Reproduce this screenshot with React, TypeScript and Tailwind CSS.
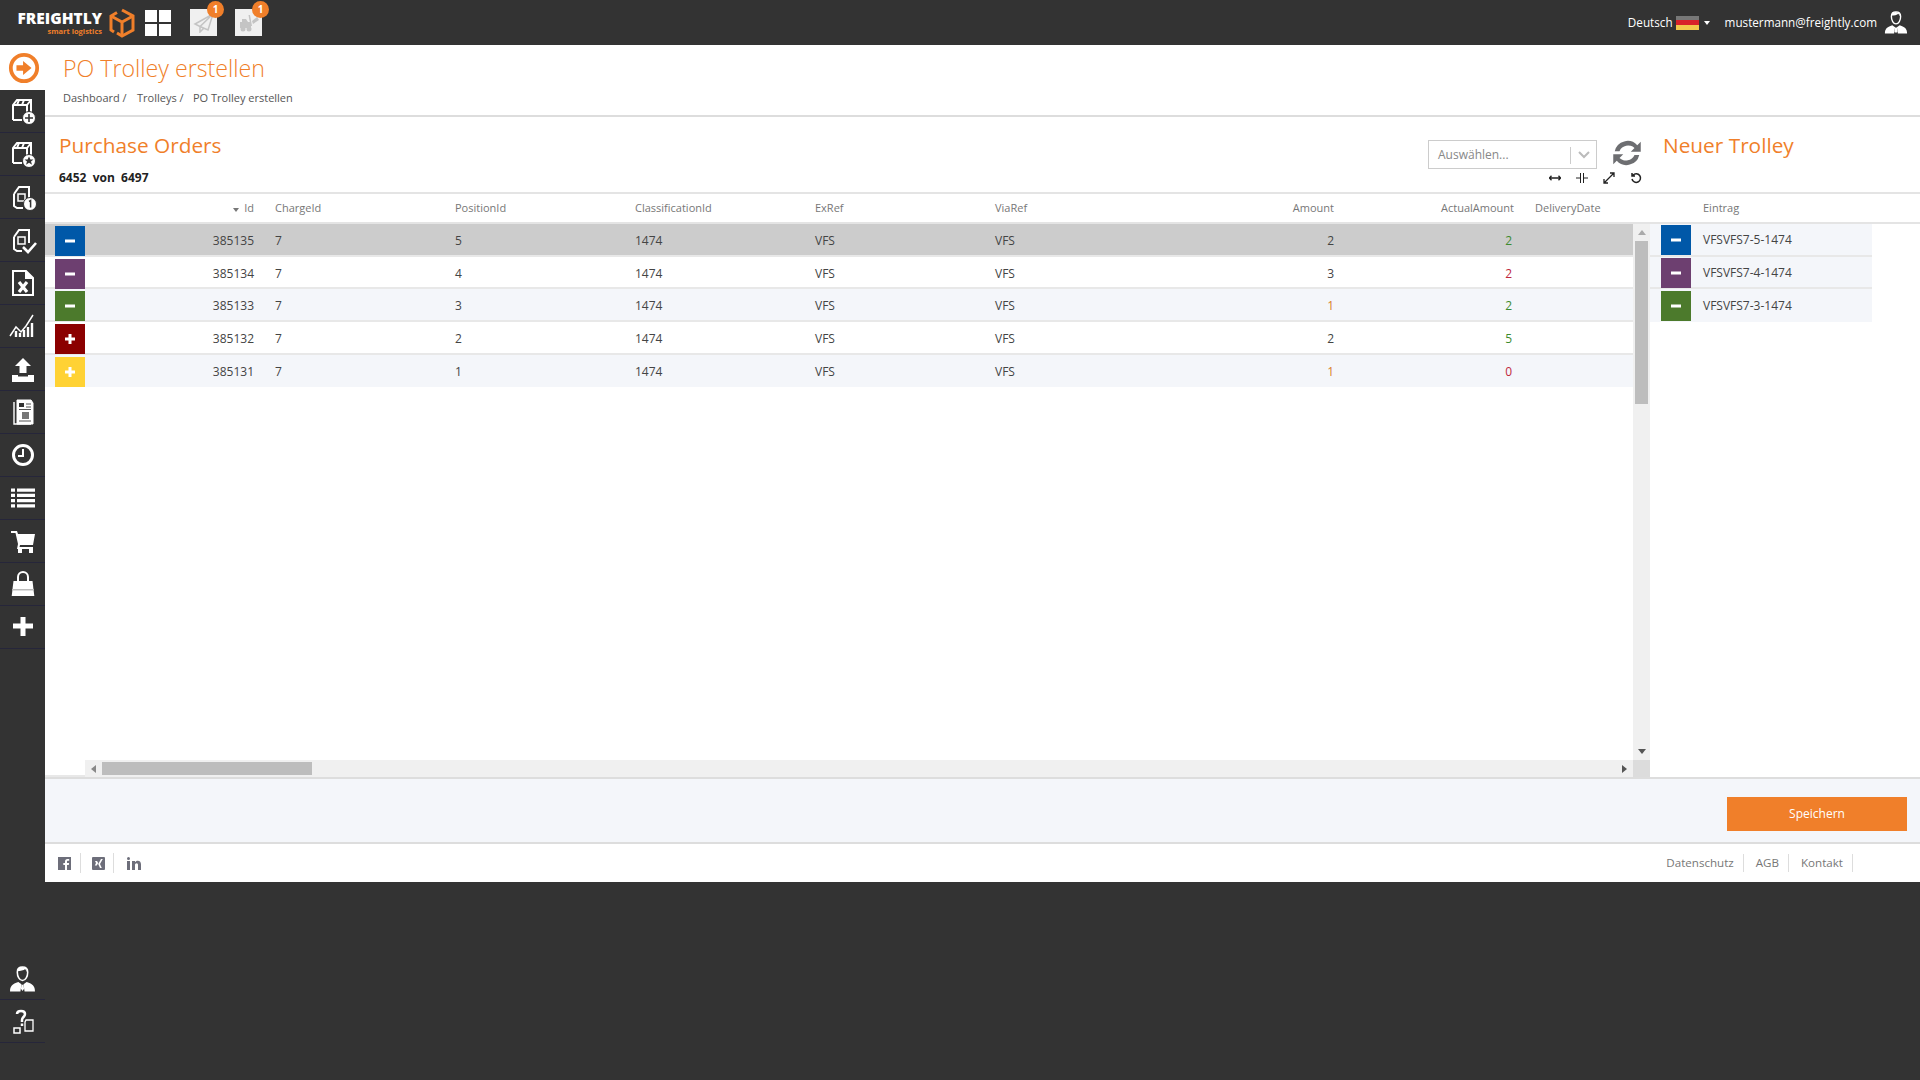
import React from "react";

const rows = [
  { id: 385135, pos: 5, amount: 2, actual: 2, actualCls: "text-[#3d8b2f]", amountCls: "text-[#444]", btn: "bg-[#0058a8]", sign: "-", bg: "bg-[#cccccc]", entry: "VFSVFS7-5-1474" },
  { id: 385134, pos: 4, amount: 3, actual: 2, actualCls: "text-[#c0283c]", amountCls: "text-[#444]", btn: "bg-[#6d3f70]", sign: "-", bg: "bg-white", entry: "VFSVFS7-4-1474" },
  { id: 385133, pos: 3, amount: 1, actual: 2, actualCls: "text-[#3d8b2f]", amountCls: "text-[#d9822b]", btn: "bg-[#4c7a2c]", sign: "-", bg: "bg-[#f4f6fa]", entry: "VFSVFS7-3-1474" },
  { id: 385132, pos: 2, amount: 2, actual: 5, actualCls: "text-[#3d8b2f]", amountCls: "text-[#444]", btn: "bg-[#8b0000]", sign: "+", bg: "bg-white", entry: "" },
  { id: 385131, pos: 1, amount: 1, actual: 0, actualCls: "text-[#c0283c]", amountCls: "text-[#d9822b]", btn: "bg-[#ffd234]", sign: "+", bg: "bg-[#f4f6fa]", entry: "" },
];

const gridCols = "grid grid-cols-[230px_180px_180px_180px_180px_180px_180px_180px_98px]";

function SignButton({ cls, sign }: { cls: string; sign: string }) {
  return (
    <div className={`flex h-[30px] w-[30px] items-center justify-center ${cls}`}>
      <svg width="12" height="12" viewBox="0 0 12 12" fill="white">
        <rect x="1" y="4.5" width="10" height="3" />
        {sign === "+" && <rect x="4.5" y="1" width="3" height="10" />}
      </svg>
    </div>
  );
}

function Box({ children }: { children: React.ReactNode }) {
  return (
    <svg width="30" height="30" viewBox="0 0 30 30" fill="none" stroke="white" strokeWidth="2">
      {children}
    </svg>
  );
}

const sideIcons: React.ReactNode[] = [
  <Box key="a">
    <path d="M5 24V9l4-5h14v12M5 9h14v11M19 9l4-5M5 24h9M11 4l-2 5M16 4l-2 5" />
    <circle cx="21" cy="22" r="6.5" fill="white" stroke="#333" strokeWidth="1" />
    <path d="M21 18v8M17 22h8" stroke="#333" strokeWidth="1.6" />
  </Box>,
  <Box key="b">
    <path d="M5 24V9l4-5h14v12M5 9h14v11M19 9l4-5M5 24h9M11 4l-2 5M16 4l-2 5" />
    <circle cx="21" cy="22" r="6.5" fill="white" stroke="#333" strokeWidth="1" />
    <path d="M21 17.5l1.4 3h3.1l-2.5 2 1 3.2-3-1.900-3 1.900 1-3.200-2.500-2h3.100z" fill="#333" stroke="none" />
  </Box>,
  <Box key="c">
    <path d="M6 12l5-7h10v12M6 12v12l3 2h6" />
    <rect x="10" y="12" width="7" height="7" strokeWidth="1.5" />
    <circle cx="22" cy="22" r="6.5" fill="white" stroke="#333" strokeWidth="1" />
    <path d="M21 19.5l1.6-1v7" stroke="#333" strokeWidth="1.5" />
  </Box>,
  <Box key="d">
    <path d="M6 12l5-7h10v13M6 12v12l3 2h5" />
    <rect x="10" y="12" width="7" height="7" strokeWidth="1.5" />
    <path d="M15 22l5 5 8-9" strokeWidth="2.6" />
  </Box>,
  <Box key="e">
    <path d="M5 3h13l7 7v17H5z" />
    <path d="M18 3v7h7" fill="white" />
    <path d="M11 14l8 10M19 14l-8 10" strokeWidth="3.2" />
  </Box>,
  <Box key="f">
    <path d="M2 25l6-9 5 5 5-6 7-11" strokeWidth="1.5" />
    <path d="M8 26v-6M12 26v-4M16 26v-7M20 26v-10M24 26V12" strokeWidth="2.4" />
  </Box>,
  <svg key="g" width="30" height="30" viewBox="0 0 30 30" fill="white">
    <path d="M15 4l8 8h-4.500v7h-7v-7H7z" />
    <path d="M4 21h6v1.500h10V21h6v7H4z" />
  </svg>,
  <Box key="h">
    <path d="M9 3h14l2 3v21H9z" fill="white" stroke="white" strokeWidth="1" />
    <path d="M6 5v22h17" strokeWidth="1.4" />
    <rect x="11" y="6" width="5" height="4" fill="#333" stroke="none" />
    <path d="M18 7h5M18 10h5M11 12.500h12M11 24h12" stroke="#555" strokeWidth="1" />
    <rect x="14" y="15" width="7" height="7" fill="#777" stroke="none" />
  </Box>,
  <svg key="i" width="30" height="30" viewBox="0 0 30 30" fill="none" stroke="white">
    <circle cx="15" cy="15" r="9.500" strokeWidth="3" />
    <path d="M15 9v7h-5" strokeWidth="2" />
  </svg>,
  <svg key="j" width="30" height="30" viewBox="0 0 30 30" fill="white">
    <path d="M3 5.500h4v3.200H3zM9 5.500h18v3.200H9zM3 10.800h4V14H3zM9 10.800h18V14H9zM3 16h4v3.200H3zM9 16h18v3.200H9zM3 21.300h4v3.200H3zM9 21.300h18v3.200H9z" />
  </svg>,
  <svg key="k" width="30" height="30" viewBox="0 0 30 30" fill="white">
    <path d="M3 5h6l1 3h17l-2 11H12l-.5 2H25v2H9l1-5L7.500 7H3z" />
    <rect x="10" y="23" width="4" height="4" />
    <rect x="21" y="23" width="4" height="4" />
  </svg>,
  <svg key="l" width="30" height="30" viewBox="0 0 30 30" fill="white">
    <path d="M5.500 12h19l1.800 15H3.700z" />
    <path d="M10 14V8a5 5 0 0 1 10 0v6" fill="none" stroke="white" strokeWidth="2" />
    <rect x="4" y="20" width="22" height="1.500" fill="#bbb" />
  </svg>,
  <svg key="m" className="-mt-[3px]" width="30" height="30" viewBox="0 0 30 30" fill="white">
    <path d="M12.500 6h5v6.500H25v5h-7.500V25h-5v-7.500H5v-5h7.500z" />
  </svg>,
];

function Person({ size = 26 }: { size?: number }) {
  return (
    <svg width={size} height={size} viewBox="0 0 26 26" fill="white">
      <path d="M13 1c3.500 0 5 2 5 5 0 4-2 8-5 8s-5-4-5-8c0-3 1.500-5 5-5z" fill="none" stroke="white" strokeWidth="1.500" />
      <path d="M8.500 5c2 0 6-.5 7-2l2 3-1-4-4-1-4 1z" />
      <path d="M9 15.500l3 2-1 7H1c0-5 2-7 8-9zM17 15.500l-3 2 1 7h10c0-5-2-7-8-9z" />
      <path d="M12 18h2l.5 4-1.500 2-1.500-2z" />
    </svg>
  );
}

function SideItem({ children }: { children: React.ReactNode }) {
  return (
    <div className="flex h-[43px] items-center justify-center border-b border-[#26263a]">{children}</div>
  );
}

function TopTile({ children }: { children: React.ReactNode }) {
  return (
    <div className="relative flex h-[27px] w-[27px] items-center justify-center bg-[#f0f0f0]">
      {children}
      <span className="absolute -right-[7px] -top-[8px] flex h-[17px] w-[17px] items-center justify-center rounded-full bg-[#f07f2a] text-[10px] font-bold text-white">
        1
      </span>
    </div>
  );
}

function SmallIcon({ children }: { children: React.ReactNode }) {
  return (
    <svg width="12" height="12" viewBox="0 0 12 12" fill="none" stroke="#222" strokeWidth="1.300">
      {children}
    </svg>
  );
}

function FooterLink({ label }: { label: string }) {
  return <span className="flex h-[18px] items-center border-r border-[#ddd] pl-[12px] pr-[9px] text-[11.600px] text-[#777]">{label}</span>;
}

export default function App() {
  return (
    <div className="flex h-[1080px] w-[1920px] flex-col overflow-hidden bg-[#333333] font-['Open_Sans',sans-serif]">
      <header className="flex h-[45px] items-center text-white">
        <div className="ml-[17px] flex w-[85px] flex-col items-end leading-none">
          <span className="text-[15.500px] font-extrabold leading-[15px]">FREIGHTLY</span>
          <span className="mt-[1px] text-[7.500px] font-bold leading-[8px] text-[#f07f2a]">smart logistics</span>
        </div>
        <svg className="ml-[7px]" width="26" height="30" viewBox="0 0 26 30" fill="none" stroke="#f07f2a" strokeWidth="3">
          <path d="M13 2l11 6v14l-11 6-5-3M8 4.500L2 8v14l3 2" />
          <path d="M2 8l11 6 11-6M13 14v14" />
        </svg>
        <div className="ml-[10px] grid h-[26px] w-[26px] grid-cols-2 gap-[2px]">
          <div className="bg-white" />
          <div className="bg-white" />
          <div className="bg-white" />
          <div className="bg-white" />
        </div>
        <div className="ml-[19px]">
          <TopTile>
            <svg width="21" height="21" viewBox="0 0 21 21" fill="none" stroke="#c4c4c4" strokeWidth="1.500">
              <path d="M20 2L2 12l5 2.500zM7 14.500V20l3.500-3.500M20 2l-5 16-8-3.500" />
            </svg>
          </TopTile>
        </div>
        <div className="ml-[18px]">
          <TopTile>
            <svg width="22" height="20" viewBox="0 0 22 20" fill="#c4c4c4">
              <path d="M2 9h2V6h4l2 3h3v6H2z" />
              <path d="M12 2l2 11h-1.500L10.500 2zM14 8l5-4 2 3-6 4z" />
              <circle cx="5" cy="16" r="2.500" />
              <circle cx="11" cy="16" r="2.500" />
            </svg>
          </TopTile>
        </div>
        <div className="ml-auto flex items-center">
          <span className="text-[11.700px]">Deutsch</span>
          <div className="ml-[3px] flex h-[14px] w-[23px] flex-col">
            <div className="flex-1 bg-[#777]" />
            <div className="flex-1 bg-[#d8232a]" />
            <div className="flex-1 bg-[#f2c94c]" />
          </div>
          <div className="ml-[5px] h-0 w-0 border-x-[3.500px] border-t-[4px] border-x-transparent border-t-white" />
          <span className="ml-[15px] text-[11.700px]">mustermann@freightly.com</span>
          <div className="ml-[7px] mr-[12px]">
            <Person size={24} />
          </div>
        </div>
      </header>

      <div className="flex flex-1">
        <aside className="flex w-[45px] flex-col justify-between pb-[37px]">
          <div>
            <div className="flex h-[45px] items-center justify-center bg-white pl-[3px]">
              <svg width="32" height="32" viewBox="0 0 34 34">
                <circle cx="17" cy="17" r="14" fill="none" stroke="#f07f2a" strokeWidth="4" />
                <path d="M9 14h7V9.500l9 7.500-9 7.500V20H9z" fill="#f07f2a" />
              </svg>
            </div>
            {sideIcons.map((icon, i) => (
              <SideItem key={i}>{icon}</SideItem>
            ))}
          </div>
          <div>
            <SideItem>
              <div className="mt-[2px]">
                <Person size={27} />
              </div>
            </SideItem>
            <SideItem>
              <svg className="mt-[2px]" width="26" height="26" viewBox="0 0 26 26" fill="none" stroke="white">
                <path d="M7 5c0-4 8-4 8 0 0 3-3 3-3 6v2" strokeWidth="2.500" />
                <path d="M12 14.500v2.500" strokeWidth="2.500" />
                <path d="M16 11h4l3 0v11h-8V13z" strokeWidth="1.300" />
                <rect x="4" y="19" width="6" height="5" strokeWidth="1.500" />
              </svg>
            </SideItem>
          </div>
        </aside>

        <main className="flex h-[837px] flex-1 flex-col bg-white">
          <div className="h-[72px] border-b-2 border-[#dddddd] pl-[18px]">
            <h1 className="pt-[6px] text-[23.200px] font-light leading-[34px] text-[#f07f2a]">PO Trolley erstellen</h1>
            <div className="mt-[5px] flex text-[11px] leading-[16px] text-[#555]">
              <span className="w-[74px]">Dashboard /</span>
              <span className="w-[56px]">Trolleys /</span>
              <span>PO Trolley erstellen</span>
            </div>
          </div>

          <div className="flex h-[77px] border-b-2 border-[#e4e4e4]">
            <div className="flex w-[1605px] justify-between pl-[14px] pr-[8px]">
              <div>
                <h2 className="pt-[13px] text-[20.800px] leading-[30px] text-[#f07f2a]">Purchase Orders</h2>
                <p className="mt-[10px] text-[12px] font-bold leading-[16px] text-[#222]">6452&nbsp; von&nbsp; 6497</p>
              </div>
              <div className="flex flex-col items-end pt-[23px]">
                <div className="flex items-center">
                  <div className="flex h-[29px] w-[169px] items-center border border-[#cccccc] pl-[9px] pt-[1px] text-[12px] text-[#888]">
                    Auswählen...
                    <div className="ml-auto flex h-[17px] w-[26px] items-center justify-center border-l border-[#cccccc]">
                      <svg width="12" height="8" viewBox="0 0 12 8" fill="none" stroke="#bbb" strokeWidth="2">
                        <path d="M1 1l5 5 5-5" />
                      </svg>
                    </div>
                  </div>
                  <svg className="ml-[15px] -mt-[4px]" width="30" height="30" viewBox="0 0 24 24" fill="#6d6e71">
                    <path d="M23 3v8h-8l3-3a7.500 7.500 0 0 0-12 2.500H2.200A10.500 10.500 0 0 1 20.200 5.800zM1 21v-8h8l-3 3a7.500 7.500 0 0 0 12-2.500h3.800A10.500 10.500 0 0 1 3.800 18.200z" />
                  </svg>
                </div>
                <div className="mt-[3px] flex w-[93px] justify-between">
                  <SmallIcon>
                    <path d="M0 6h12M2.500 3.800L.5 6l2 2.200M9.500 3.800l2 2.200-2 2.200" />
                  </SmallIcon>
                  <SmallIcon>
                    <path d="M4.500 1v10M7.500 1v10M0 6h4M8 6h4" strokeWidth="1" />
                  </SmallIcon>
                  <SmallIcon>
                    <path d="M1.500 10.500l9-9M1 7v4h4M7 1h4v4" />
                  </SmallIcon>
                  <SmallIcon>
                    <path d="M3 3.200a4.300 4.300 0 1 1-1 3.800M2 1v3h3" strokeWidth="1.500" />
                  </SmallIcon>
                </div>
              </div>
            </div>
            <h2 className="pl-[13px] pt-[13px] text-[20.800px] leading-[30px] text-[#f07f2a]">Neuer Trolley</h2>
          </div>

          <div className="flex flex-1">
            <div className="flex w-[1605px] flex-col">
              <div className="flex h-[30px] border-b-2 border-[#e4e4e4] pt-[1px] text-[11px] text-[#777]">
                <div className={`${gridCols} w-[1588px] items-center`}>
                  <div className="flex items-center justify-end pr-[21px]">
                    <div className="mr-[5px] mt-[3px] h-0 w-0 border-x-[3.500px] border-t-[4px] border-x-transparent border-t-[#777]" />
                    Id
                  </div>
                  <div>ChargeId</div>
                  <div>PositionId</div>
                  <div>ClassificationId</div>
                  <div>ExRef</div>
                  <div>ViaRef</div>
                  <div className="pr-[21px] text-right">Amount</div>
                  <div className="pr-[21px] text-right">ActualAmount</div>
                  <div>DeliveryDate</div>
                </div>
              </div>
              <div className="flex flex-1">
                <div className="flex w-[1588px] flex-col">
                  <div className="flex-1 text-[12px] text-[#444]">
                    {rows.map((r) => (
                      <div key={r.id} className={`${gridCols} h-[32.700px] items-center border-b-2 border-[#e8e8e8] pt-[2px] last:border-b-transparent ${r.bg}`}>
                        <div className="flex items-center justify-between pl-[10px] pr-[21px]">
                          <SignButton cls={r.btn} sign={r.sign} />
                          <span>{r.id}</span>
                        </div>
                        <div>7</div>
                        <div>{r.pos}</div>
                        <div>1474</div>
                        <div>VFS</div>
                        <div>VFS</div>
                        <div className={`pr-[21px] text-right ${r.amountCls}`}>{r.amount}</div>
                        <div className={`pr-[23px] text-right ${r.actualCls}`}>{r.actual}</div>
                        <div />
                      </div>
                    ))}
                  </div>
                  <div className="flex h-[17px] items-end">
                    <div className="h-[2px] w-[40px] bg-[#e8e8e8]" />
                    <div className="flex h-[17px] flex-1 items-center bg-[#f0f0f0]">
                      <div className="ml-[6px] h-0 w-0 border-y-[4px] border-r-[5px] border-y-transparent border-r-[#888]" />
                      <div className="ml-[6px] h-[13px] w-[210px] bg-[#bdbdbd]" />
                      <div className="ml-auto mr-[6px] h-0 w-0 border-y-[4px] border-l-[5px] border-y-transparent border-l-[#555]" />
                    </div>
                  </div>
                </div>
                <div className="flex w-[17px] flex-col bg-[#f0f0f0]">
                  <div className="flex h-[17px] items-center justify-center">
                    <div className="h-0 w-0 border-x-[4px] border-b-[5px] border-x-transparent border-b-[#aaa]" />
                  </div>
                  <div className="mx-[2px] h-[163px] bg-[#bdbdbd]" />
                  <div className="mt-auto flex h-[18px] items-center justify-center">
                    <div className="h-0 w-0 border-x-[4px] border-t-[5px] border-x-transparent border-t-[#555]" />
                  </div>
                  <div className="h-[17px] bg-[#dcdcdc]" />
                </div>
              </div>
            </div>

            <div className="flex flex-1 flex-col">
              <div className="flex h-[30px] items-center border-b-2 border-[#e4e4e4] pl-[53px] pt-[1px] text-[11px] text-[#777]">Eintrag</div>
              <div className="w-[222px] text-[12px] text-[#444]">
                {rows
                  .filter((r) => r.entry)
                  .map((r) => (
                    <div key={r.id} className="flex h-[32.700px] items-center border-b-2 border-[#e8e8e8] bg-[#f4f6fa] pl-[11px] pt-[2px] last:border-b-transparent">
                      <SignButton cls={r.btn} sign={r.sign} />
                      <span className="ml-[12px]">{r.entry}</span>
                    </div>
                  ))}
              </div>
            </div>
          </div>

          <div className="flex h-[67px] items-center justify-end border-y-2 border-[#dddddd] bg-[#f4f6fa] pr-[13px]">
            <button className="mt-[6px] h-[34px] w-[180px] bg-[#f07f2a] text-[12px] text-white">Speichern</button>
          </div>

          <footer className="flex h-[38px] items-center pl-[13px]">
            <div className="flex h-[20px] items-center border-r border-[#ddd] pr-[9px]">
              <svg width="13" height="13" viewBox="0 0 13 13">
                <rect width="13" height="13" fill="#6d6e7a" />
                <path d="M9 13V8h1.800l.3-2H9V4.800c0-.6.200-1 1-1h1.200V2H9.500C7.800 2 7 3 7 4.500V6H5.300v2H7v5z" fill="white" />
              </svg>
            </div>
            <div className="flex h-[20px] items-center border-r border-[#ddd] pl-[11px] pr-[8px]">
              <svg width="13" height="13" viewBox="0 0 13 13">
                <rect width="13" height="13" rx="1" fill="#6d6e7a" />
                <path d="M3 4h2l1.200 2L4.800 8.500h-2L4 6zM9 2h1.800L8 7l1.800 4H8L6.200 7z" fill="white" />
              </svg>
            </div>
            <div className="pl-[13px]">
              <svg width="14" height="13" viewBox="0 0 14 13" fill="#6d6e7a">
                <rect x="0" y="4" width="3" height="9" />
                <circle cx="1.500" cy="1.500" r="1.500" />
                <path d="M5 4h3v1.300C8.600 4.400 9.500 3.800 10.800 3.800 13 3.800 14 5.200 14 7.500V13h-3V8c0-1-.4-1.700-1.400-1.700S8 7 8 8v5H5z" />
              </svg>
            </div>
            <div className="ml-auto flex pr-[67px]">
              <FooterLink label="Datenschutz" />
              <FooterLink label="AGB" />
              <FooterLink label="Kontakt" />
            </div>
          </footer>
        </main>
      </div>
    </div>
  );
}
